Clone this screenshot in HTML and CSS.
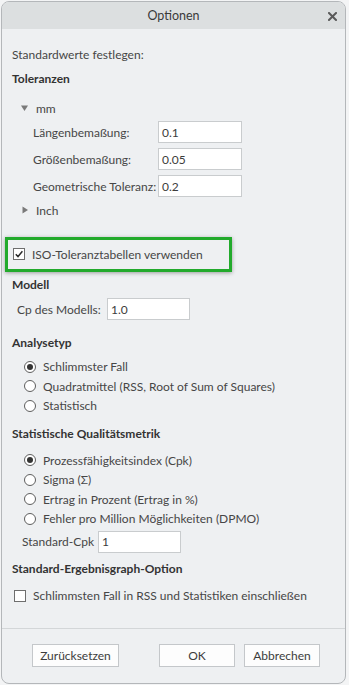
FILE: index.html
```html
<!DOCTYPE html>
<html lang="de">
<head>
<meta charset="utf-8">
<title>Optionen</title>
<link rel="stylesheet" href="styles.css">
</head>
<body>
<div class="dialog">
  <div class="titlebar">
    <span class="title">Optionen</span>
    <svg class="close" width="9" height="9" viewBox="0 0 9 9"><path d="M1 1L8 8M8 1L1 8" stroke="#5a5a5a" stroke-width="2" stroke-linecap="square"/></svg>
  </div>
  <div class="content">
    <div class="line intro">Standardwerte festlegen:</div>
    <div class="line heading h-tol">Toleranzen</div>
    <div class="line tree t-mm">
      <svg class="tri" width="8" height="8" viewBox="0 0 8 8"><polygon points="0,1.5 7,1.5 3.5,7" fill="#7a7a7a"/></svg>
      <span>mm</span>
    </div>
    <div class="field f1"><span class="flabel">Längenbemaßung:</span><span class="input w-tol">0.1</span></div>
    <div class="field f2"><span class="flabel">Größenbemaßung:</span><span class="input w-tol">0.05</span></div>
    <div class="field f2"><span class="flabel">Geometrische Toleranz:</span><span class="input w-tol">0.2</span></div>
    <div class="line tree t-inch">
      <svg class="tri" width="8" height="8" viewBox="0 0 8 8"><polygon points="1.5,0.5 7,4 1.5,7.5" fill="#7a7a7a"/></svg>
      <span>Inch</span>
    </div>
    <div class="highlight">
      <div class="check-row">
        <span class="checkbox checked"><svg width="10" height="10" viewBox="0 0 10 10"><path d="M1.8 5.2L4 7.6L8.4 2.2" fill="none" stroke="#2b2b2b" stroke-width="1.5"/></svg></span>
        <span>ISO-Toleranztabellen verwenden</span>
      </div>
    </div>
    <div class="line heading h-model">Modell</div>
    <div class="field cp"><span class="flabel">Cp des Modells:</span><span class="input w-cp">1.0</span></div>
    <div class="line heading h-ana">Analysetyp</div>
    <div class="radios r-ana">
      <div class="radio-row"><span class="radio on"></span><span>Schlimmster Fall</span></div>
      <div class="radio-row"><span class="radio"></span><span>Quadratmittel (RSS, Root of Sum of Squares)</span></div>
      <div class="radio-row"><span class="radio"></span><span>Statistisch</span></div>
    </div>
    <div class="line heading h-stat">Statistische Qualitätsmetrik</div>
    <div class="radios r-stat">
      <div class="radio-row"><span class="radio on"></span><span>Prozessfähigkeitsindex (Cpk)</span></div>
      <div class="radio-row"><span class="radio"></span><span>Sigma (Σ)</span></div>
      <div class="radio-row"><span class="radio"></span><span>Ertrag in Prozent (Ertrag in %)</span></div>
      <div class="radio-row"><span class="radio"></span><span>Fehler pro Million Möglichkeiten (DPMO)</span></div>
    </div>
    <div class="field cpk"><span class="flabel">Standard-Cpk</span><span class="input w-cp">1</span></div>
    <div class="line heading h-graph">Standard-Ergebnisgraph-Option</div>
    <div class="check-row c-graph">
      <span class="checkbox"></span>
      <span>Schlimmsten Fall in RSS und Statistiken einschließen</span>
    </div>
  </div>
  <div class="footer">
    <span class="btn b-reset">Zurücksetzen</span>
    <span class="btn b-ok">OK</span>
    <span class="btn b-cancel">Abbrechen</span>
  </div>
</div>
</body>
</html>
```
FILE: styles.css
```css
html, body {
  margin: 0;
  padding: 0;
}
body {
  width: 349px;
  height: 685px;
  background: #f3f4f5;
  font-family: Lato, "Noto Sans", sans-serif;
  font-size: 12px;
  color: #464646;
}
.dialog {
  box-sizing: border-box;
  margin: 1px 0 0 1px;
  width: 345px;
  height: 683px;
  border: 1px solid #b4b7ba;
  border-radius: 8px;
  background: #eef0f2;
  overflow: hidden;
  display: flex;
  flex-direction: column;
}
.titlebar {
  position: relative;
  height: 27px;
  flex: none;
  background: #dcdfe0;
  display: flex;
  align-items: center;
  justify-content: center;
}
.title {
  font-size: 12.5px;
  color: #3a3a3a;
}
.close {
  position: absolute;
  right: 8px;
  top: 10px;
}
.content {
  flex: 1;
  padding: 15px 0 0 10px;
  display: flex;
  flex-direction: column;
  align-items: flex-start;
}
.line {
  height: 20px;
  display: flex;
  align-items: center;
  white-space: nowrap;
}
.heading {
  font-weight: 700;
  color: #333;
}
.h-tol { margin-top: 4px; }
.tree { padding-left: 9px; gap: 7px; }
.t-mm { margin-top: 10px; }
.t-inch { margin-top: 3px; }
.field {
  display: flex;
  align-items: center;
  height: 22px;
  white-space: nowrap;
}
.f1, .f2 { padding-left: 21px; }
.f1 { margin-top: 3px; }
.f2 { margin-top: 5px; }
.flabel { width: 125px; }
.cp .flabel { width: 90px; }
.cpk .flabel { width: 76px; }
.input {
  box-sizing: border-box;
  height: 22px;
  background: #fff;
  border: 1px solid #c9ccce;
  padding: 0 3px;
  display: flex;
  align-items: center;
  color: #3c3c3c;
}
.w-tol { width: 84px; }
.w-cp { width: 83px; }
.highlight {
  box-sizing: border-box;
  margin: 17px 0 0 -7px;
  width: 227px;
  height: 35px;
  border: 3px solid #22aa2c;
  box-shadow: 0 1px 4px rgba(0, 0, 0, 0.35);
  padding: 4px 0 0 5px;
}
.check-row {
  display: flex;
  align-items: center;
  gap: 7px;
  height: 20px;
  white-space: nowrap;
}
.checkbox {
  box-sizing: border-box;
  width: 12px;
  height: 12px;
  border: 1px solid #6e6e6e;
  background: #fff;
  display: flex;
  align-items: center;
  justify-content: center;
}
.h-model { margin-top: 2px; }
.cp { margin-top: 4px; padding-left: 5px; }
.h-ana { margin-top: 12px; }
.radios {
  display: flex;
  flex-direction: column;
  padding-left: 12px;
}
.r-ana { margin-top: 5px; }
.radio-row {
  display: flex;
  align-items: center;
  gap: 7px;
  height: 19.5px;
  white-space: nowrap;
}
.radio {
  box-sizing: border-box;
  width: 12px;
  height: 12px;
  border: 1px solid #5e5e5e;
  border-radius: 50%;
  background: #fff;
  display: flex;
  align-items: center;
  justify-content: center;
}
.radio.on::after {
  content: "";
  width: 6px;
  height: 6px;
  border-radius: 50%;
  background: #333;
}
.h-stat { margin-top: 8px; }
.r-stat { margin-top: 7px; }
.cpk { margin-top: 2px; padding-left: 10px; }
.h-graph { margin-top: 6px; }
.c-graph { margin-top: 7px; padding-left: 2px; }
.footer {
  flex: none;
  height: 55px;
  border-top: 1px solid #d3d6d8;
  display: flex;
  align-items: flex-start;
  padding-top: 15px;
  box-sizing: border-box;
}
.btn {
  box-sizing: border-box;
  height: 23px;
  background: #fdfdfd;
  border: 1px solid #c4c7ca;
  display: flex;
  align-items: center;
  justify-content: center;
  color: #3c3c3c;
}
.b-reset { margin-left: 30px; width: 87px; }
.b-ok { margin-left: 40px; width: 76px; }
.b-cancel { margin-left: 9px; width: 76px; }
```
